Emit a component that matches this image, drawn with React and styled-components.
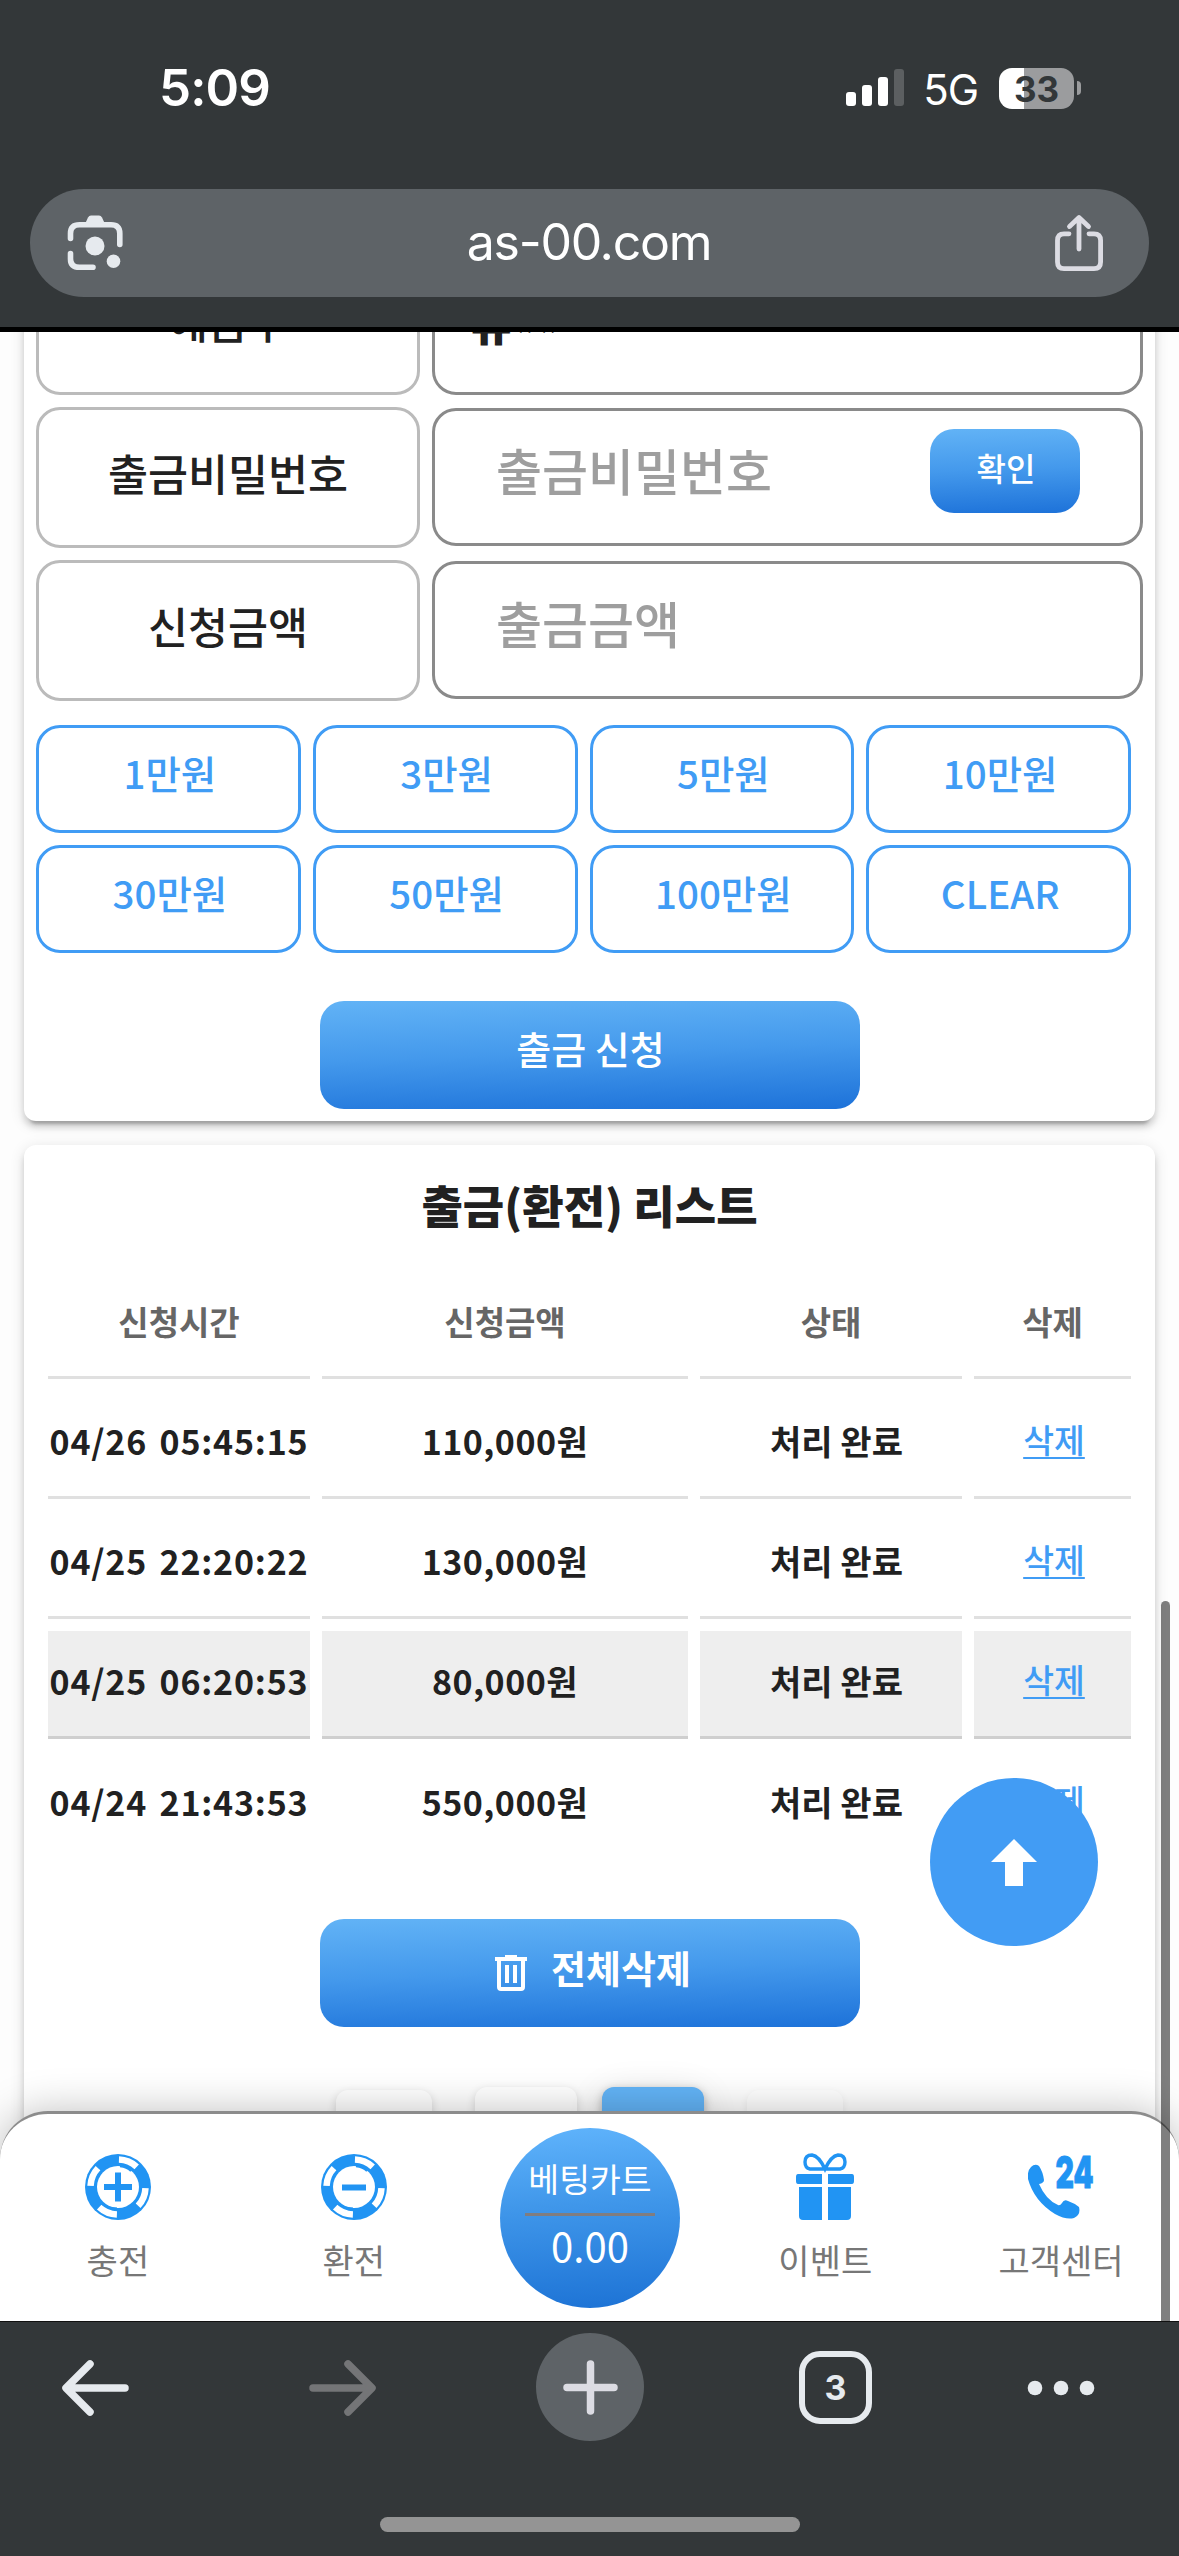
import React from "react";
import styled, { createGlobalStyle } from "styled-components";

const KR = `"Noto Sans CJK KR", "Noto Sans", sans-serif`;
const UI = `Inter, Roboto, sans-serif`;

const Global = createGlobalStyle`
  * { box-sizing: border-box; }
  body { margin: 0; background: #333739; }
  button { font: inherit; border: 0; padding: 0; background: none; cursor: pointer; }
`;

const Screen = styled.div`
  width: 1179px;
  height: 2556px;
  display: flex;
  flex-direction: column;
  overflow: hidden;
  background: #333739;
  font-family: ${KR};
  color: #212121;
`;

/* ---------- status bar + address bar ---------- */
const Header = styled.header`
  flex: none;
  height: 332px;
  border-bottom: 5px solid #000;
  padding: 60px 30px 0;
  font-family: ${UI};
  color: #fff;
`;

const StatusBar = styled.div`
  height: 56px;
  display: flex;
  align-items: center;
  justify-content: space-between;
  padding: 0 68px 0 129px;
`;

const Clock = styled.span`
  font-size: 51px;
  font-weight: 600;
  line-height: 56px;
  letter-spacing: -0.9px;
`;

const StatusIcons = styled.div`
  display: flex;
  align-items: center;
`;

const Network = styled.span`
  font-size: 42px;
  font-weight: 400;
  line-height: 56px;
  margin: 3px 21px 0 19px;
  letter-spacing: -1px;
`;

const Battery = styled.div`
  width: 75px;
  height: 41px;
  border-radius: 13px;
  background: linear-gradient(90deg, #fff 33%, #9b9c9e 33%);
  color: #333739;
  font-size: 35px;
  font-weight: 700;
  line-height: 42px;
  text-align: center;
`;

const BatteryNub = styled.div`
  width: 4px;
  height: 14px;
  margin-left: 3px;
  border-radius: 0 4px 4px 0;
  background: #9b9c9e;
`;

const AddressBar = styled.div`
  height: 108px;
  margin-top: 73px;
  border-radius: 54px;
  background: #5e6367;
  display: flex;
  align-items: center;
  justify-content: space-between;
  padding: 0 45px 0 36px;
`;

const Address = styled.span`
  font-size: 50px;
  line-height: 60px;
  letter-spacing: -1.3px;
  margin-top: -3px;
`;

/* ---------- page ---------- */
const Viewport = styled.main`
  flex: none;
  position: relative;
  height: 1989px;
  overflow: hidden;
  background: #fdfdfd;
`;

const ScrolledPage = styled.div`
  margin-top: -90px;
  padding: 0 24px;
  display: flex;
  flex-direction: column;
  gap: 24px;
`;

const Card = styled.section`
  background: #fff;
  border-radius: 12px;
  padding: ${(p) => p.$pad};
  min-height: ${(p) => p.$minHeight || "0"};
  box-shadow: 0 9px 3px -6px rgba(0, 0, 0, 0.2), 0 6px 6px rgba(0, 0, 0, 0.14),
    0 3px 15px rgba(0, 0, 0, 0.12);
  display: flex;
  flex-direction: column;
  align-items: center;
`;

const FormGrid = styled.div`
  width: 100%;
  display: grid;
  grid-template-columns: 384px 711px;
  grid-auto-rows: 141px;
  gap: 12px;
`;

const FieldLabel = styled.label`
  border: 3px solid #bbb;
  border-radius: 24px;
  display: flex;
  align-items: center;
  justify-content: center;
  padding-bottom: ${(p) => (p.$low ? 7 : 10)}px;
  font-size: 43.5px;
  font-weight: 500;
  line-height: 60px;
`;

const FieldBox = styled.div`
  margin: ${(p) => (p.$value ? "0" : "1px 0 2px")};
  border: 3px solid #8a8a8a;
  border-radius: 24px;
  display: flex;
  justify-content: ${(p) => (p.$value ? "flex-start" : "space-between")};
  align-items: center;
  padding: 0 60px ${(p) => (p.$value ? 5 : 16)}px ${(p) => (p.$value ? 36 : 61)}px;
  font-size: ${(p) => (p.$value ? 44 : 50)}px;
  font-weight: ${(p) => (p.$value ? 900 : 500)};
  line-height: 60px;
  color: ${(p) => (p.$value ? "#212121" : "#9e9e9e")};
`;

const Mask = styled.span`
  padding-top: 18px;
  margin-left: 2px;
`;

const GradientButton = styled.button`
  width: ${(p) => p.$w}px;
  height: ${(p) => p.$h}px;
  margin-top: ${(p) => p.$mt || 0}px;
  border-radius: 24px;
  background: linear-gradient(178deg, #62b3f6 0%, #4499ec 48%, #1d72d9 100%);
  color: #fff;
  font-size: ${(p) => p.$size}px;
  font-weight: ${(p) => p.$weight || 500};
  line-height: 50px;
  padding: 0 0 ${(p) => p.$lift}px ${(p) => p.$indent || 0}px;
  display: flex;
  align-items: center;
  justify-content: center;
`;

const AmountGrid = styled.div`
  width: 1095px;
  align-self: flex-start;
  margin: 24px 0 48px;
  display: grid;
  grid-template-columns: repeat(4, 1fr);
  grid-auto-rows: 108px;
  gap: 12px;
`;

const AmountButton = styled.button`
  border: 3px solid #409cf5;
  border-radius: 24px;
  color: #409cf5;
  font-size: 38.5px;
  font-weight: 500;
  line-height: 50px;
  padding: 0 0 14px 3px;
`;

const ListTitle = styled.h2`
  margin: 2px 0 33px;
  font-size: 45px;
  font-weight: 900;
  line-height: 67px;
`;

const Table = styled.div`
  width: 1083px;
  margin-bottom: 60px;
  display: grid;
  grid-template-columns: 262px 366px 262px 157px;
  grid-auto-rows: 108px;
  gap: 12px;
`;

const Cell = styled.div`
  border-bottom: 3px solid ${(p) => (p.$last ? "transparent" : p.$shaded ? "#cfcfcf" : "#e0e0e0")};
  background: ${(p) => (p.$shaded ? "#eee" : "transparent")};
  color: ${(p) => (p.$head ? "#666" : "#212121")};
  font-size: ${(p) => (p.$head ? 33 : 34)}px;
  font-weight: 700;
  line-height: 50px;
  white-space: nowrap;
  letter-spacing: ${(p) => p.$spacing || 0}px;
  word-spacing: ${(p) => (p.$spacing ? 4 : 0)}px;
  padding: 0 0 ${(p) => (p.$last ? 4 : 6)}px ${(p) => p.$indent || 0}px;
  display: flex;
  align-items: center;
  justify-content: center;
`;

const DeleteLink = styled.a`
  margin-top: -3px;
  color: #409cf5;
  font-size: 33.5px;
  font-weight: 500;
  text-decoration: underline;
  text-decoration-thickness: 2px;
  text-underline-offset: 4px;
  text-decoration-skip-ink: none;
`;

const TrashIcon = styled.svg`
  margin: 12px 24px 0 0;
`;

const Pager = styled.div`
  margin-top: 60px;
  display: flex;
  align-items: flex-start;
`;

const PageButton = styled.button`
  width: ${(p) => (p.$wide ? 102 : 96)}px;
  height: ${(p) => (p.$wide ? 102 : 96)}px;
  margin: ${(p) => (p.$wide ? 0 : 3)}px ${(p) => p.$gap || 0}px 0 0;
  border-radius: 12px;
  background: ${(p) => (p.$active ? "#62b3f6" : "#fff")};
  box-shadow: ${(p) =>
    p.$active
      ? "0 3px 10px rgba(0,0,0,.28), 0 6px 36px rgba(0,0,0,.12)"
      : p.$faint
      ? "0 3px 8px rgba(0,0,0,.07)"
      : "0 3px 10px rgba(0,0,0,.16)"};
`;

/* ---------- overlays ---------- */
const TopButton = styled.button`
  position: absolute;
  right: 81px;
  top: 1446px;
  width: 168px;
  height: 168px;
  border-radius: 50%;
  background: #429cf4;
  display: flex;
  align-items: center;
  justify-content: center;
`;

const SiteNav = styled.nav`
  position: absolute;
  left: 0;
  right: 0;
  bottom: 0;
  height: 210px;
  border-top: 3px solid #8c8c8c;
  border-radius: 48px 48px 0 0;
  background: #fff;
  box-shadow: 0 0 42px rgba(0, 0, 0, 0.25);
  display: grid;
  grid-template-columns: repeat(5, 1fr);
  justify-items: center;
`;

const NavItem = styled.a`
  padding-top: 38px;
  display: flex;
  flex-direction: column;
  align-items: center;
  font-size: 34px;
  line-height: 50px;
  color: #777;

  svg {
    height: 70px;
    display: block;
    margin-bottom: 13px;
  }
`;

const BetCart = styled.div`
  width: 180px;
  height: 180px;
  margin: 14px 0 0 1px;
  border-radius: 50%;
  background: linear-gradient(176deg, #60b4fc 0%, #4097ea 42%, #1c72d5 100%);
  color: #fff;
  display: flex;
  flex-direction: column;
  align-items: center;
`;

const CartTitle = styled.div`
  width: 130px;
  height: 88px;
  padding-top: 25px;
  border-bottom: 3px solid #807d80;
  display: flex;
  justify-content: center;
  font-size: 33.5px;
  line-height: 50px;
  white-space: nowrap;
`;

const CartTotal = styled.div`
  margin-top: 4px;
  font-size: 40px;
  line-height: 50px;
`;

const ScrollThumb = styled.div`
  position: absolute;
  right: 9px;
  top: 1269px;
  bottom: -12px;
  width: 9px;
  border-radius: 5px;
  background: rgba(0, 0, 0, 0.5);
`;

/* ---------- browser toolbar ---------- */
const Toolbar = styled.footer`
  flex: 1;
  border-top: 1px solid #111;
  display: flex;
  flex-direction: column;
  align-items: center;
  justify-content: space-between;
  padding: 11px 0 24px;
`;

const ToolRow = styled.div`
  width: 100%;
  height: 108px;
  padding: 0 84px 0 62px;
  display: flex;
  align-items: center;
`;

const ToolButton = styled.button`
  width: ${(p) => p.$w}px;
  margin-left: ${(p) => p.$ml || 0}px;
  height: 108px;
  padding-top: 1px;
  display: flex;
  align-items: center;
  justify-content: center;
`;

const NewTab = styled(ToolButton)`
  padding-top: 0;
  border-radius: 50%;
  background: #5e6367;
`;

const TabCount = styled.span`
  width: 73px;
  height: 73px;
  border: 6.5px solid #e6eaee;
  border-radius: 21px;
  color: #e6eaee;
  font-family: ${UI};
  font-size: 34px;
  font-weight: 700;
  line-height: 61px;
  text-align: center;
`;

const HomeIndicator = styled.div`
  width: 420px;
  height: 15px;
  border-radius: 8px;
  background: #949494;
`;

const Signal = () => (
  <svg width="58" height="38" viewBox="0 0 58 38" fill="#fff">
    <rect x="0" y="23" width="10" height="14" rx="3" />
    <rect x="16" y="16" width="10" height="21" rx="3" />
    <rect x="32" y="8" width="10" height="29" rx="3" />
    <rect x="48" y="0" width="10" height="37" rx="3" fill="#5c5f61" />
  </svg>
);

const LensIcon = () => (
  <svg width="58" height="58" viewBox="66 214 58 58" fill="none" stroke="#e6eaee" strokeWidth="5.6" strokeLinecap="round">
    <path d="M70.5 238.500V233.500Q70.500 224.800 79.500 224.800H111Q119.800 224.800 119.800 233.500V244.500" />
    <path d="M70.500 253.500V259Q70.500 267.300 79.500 267.300H93" />
    <path d="M85 224L88 217.500Q89 215.500 91 215.500H99Q101 215.500 102 217.500L105 224Z" fill="#e6eaee" stroke="none" />
    <circle cx="95" cy="246" r="9.500" fill="#e6eaee" stroke="none" />
    <circle cx="113.500" cy="261.300" r="6.800" fill="#e6eaee" stroke="none" />
  </svg>
);

const ShareIcon = () => (
  <svg width="50" height="60" viewBox="1054 214 50 60" fill="none" stroke="#dcdce3" strokeWidth="4.800" strokeLinecap="round" strokeLinejoin="round">
    <path d="M1069 234.800H1064Q1057.500 234.800 1057.500 241.500V263Q1057.500 269.600 1064 269.600H1094Q1100.600 269.600 1100.600 263V241.500Q1100.600 234.800 1094 234.800H1089" />
    <path d="M1079 250V219M1069.500 227.500L1079 218.500L1088.500 227.500" />
  </svg>
);

const ChipIcon = ({ plus }) => (
  <svg width="66" viewBox="0 -2 66 70" fill="none">
    <circle cx="33" cy="33" r="33" fill="#2194f3" />
    <circle cx="33" cy="33" r="27.500" stroke="#fff" strokeWidth="6.500" strokeDasharray="19.600 23.600" strokeDashoffset="0" transform="rotate(-88 33 33)" />
    <circle cx="33" cy="33" r="21" fill="#fff" />
    <path d="M35 12.300Q42 13 46 17M16 49Q22 54 32 54.500" stroke="#2194f3" strokeWidth="2" />
    <path d={plus ? "M19 33H47M33 18.500V47.500" : "M21 33.500H45"} stroke="#2194f3" strokeWidth="6" />
  </svg>
);

const GiftIcon = () => (
  <svg width="60" viewBox="0 0 60 70" fill="#2194f3">
    <path d="M3 22H27V32H3Q1 32 1 29V25Q1 22 3 22ZM33 22H57Q59 22 59 25V29Q59 32 57 32H33Z" />
    <path d="M4 35H27V68H8Q4 68 4 64ZM33 35H56V64Q56 68 52 68H33Z" />
    <path d="M30 17H15Q10 16 10 10Q10 3 17 3Q24 4 30 17Q36 4 43 3Q50 3 50 10Q50 16 45 17Z" fill="none" stroke="#2194f3" strokeWidth="3.400" />
  </svg>
);

const Phone24Icon = () => (
  <svg width="66" viewBox="0 0 66 70" fill="#2194f3">
    <path d="M3 15Q7 11 11 14Q15 20 16 28Q16 31 11 32Q18 48 30 53Q32 54 34 51Q36 47 40 49Q46 51 51 55Q53 63 46 66Q38 68 27 62Q6 49 0 27Q-1 19 3 15Z" />
    <text x="27.500" y="36" fontFamily="Inter, sans-serif" fontWeight="900" fontSize="44" textLength="38" lengthAdjust="spacingAndGlyphs" stroke="#2194f3" strokeWidth="1">24</text>
  </svg>
);

const amounts = ["1만원", "3만원", "5만원", "10만원", "30만원", "50만원", "100만원", "CLEAR"];

const withdrawals = [
  { time: "04/26 05:45:15", amount: "110,000원" },
  { time: "04/25 22:20:22", amount: "130,000원" },
  { time: "04/25 06:20:53", amount: "80,000원", shaded: true },
  { time: "04/24 21:43:53", amount: "550,000원", last: true },
];

export default function App() {
  return (
    <Screen>
      <Global />
      <Header>
        <StatusBar>
          <Clock>5:09</Clock>
          <StatusIcons>
            <Signal />
            <Network>5G</Network>
            <Battery>33</Battery>
            <BatteryNub />
          </StatusIcons>
        </StatusBar>
        <AddressBar>
          <LensIcon />
          <Address>as-00.com</Address>
          <ShareIcon />
        </AddressBar>
      </Header>

      <Viewport>
        <ScrolledPage>
          <Card $pad="12px">
            <FormGrid>
              <FieldLabel $low>예금주</FieldLabel>
              <FieldBox $value>
                류<Mask>**</Mask>
              </FieldBox>
              <FieldLabel>출금비밀번호</FieldLabel>
              <FieldBox>
                출금비밀번호
                <GradientButton $w={150} $h={84} $mt={3} $size={32} $lift={8} $indent={2}>확인</GradientButton>
              </FieldBox>
              <FieldLabel>신청금액</FieldLabel>
              <FieldBox>출금금액</FieldBox>
            </FormGrid>
            <AmountGrid>
              {amounts.map((a) => (
                <AmountButton key={a}>{a}</AmountButton>
              ))}
            </AmountGrid>
            <GradientButton $w={540} $h={108} $size={38} $lift={14} $indent={2}>출금 신청</GradientButton>
          </Card>

          <Card $pad="24px 24px 0" $minHeight="1300px">
            <ListTitle>출금(환전) 리스트</ListTitle>
            <Table>
              {["신청시간", "신청금액", "상태", "삭제"].map((h) => (
                <Cell key={h} $head>{h}</Cell>
              ))}
              {withdrawals.map((w) => (
                <React.Fragment key={w.time}>
                  <Cell $shaded={w.shaded} $last={w.last} $spacing={0.8}>{w.time}</Cell>
                  <Cell $shaded={w.shaded} $last={w.last} $spacing={0.5}>{w.amount}</Cell>
                  <Cell $shaded={w.shaded} $last={w.last} $indent={11}>처리 완료</Cell>
                  <Cell $shaded={w.shaded} $last={w.last} $indent={3}>
                    <DeleteLink>삭제</DeleteLink>
                  </Cell>
                </React.Fragment>
              ))}
            </Table>
            <GradientButton $w={540} $h={108} $size={38} $weight={700} $lift={12} $indent={7}>
              <TrashIcon width="32" height="36" viewBox="0 0 32 36" fill="none" stroke="#fff" strokeWidth="4">
                <path d="M0 4H32M10 2H22M4 4V32Q4 34 6 34H26Q28 34 28 32V4M12 10V28M20 10V28" />
              </TrashIcon>
              전체삭제
            </GradientButton>
            <Pager>
              <PageButton $gap={43} />
              <PageButton $wide $gap={25} />
              <PageButton $wide $active $gap={43} />
              <PageButton $faint />
            </Pager>
          </Card>
        </ScrolledPage>

        <TopButton>
          <svg width="46" height="47" viewBox="0 0 46 47" fill="#fff">
            <path d="M23 0L46 23H32V47H14V23H0Z" />
          </svg>
        </TopButton>

        <SiteNav>
          <NavItem><ChipIcon plus />충전</NavItem>
          <NavItem><ChipIcon />환전</NavItem>
          <BetCart>
            <CartTitle>베팅카트</CartTitle>
            <CartTotal>0.00</CartTotal>
          </BetCart>
          <NavItem><GiftIcon />이벤트</NavItem>
          <NavItem><Phone24Icon />고객센터</NavItem>
        </SiteNav>
        <ScrollThumb />
      </Viewport>

      <Toolbar>
        <ToolRow>
          <ToolButton $w={67}>
            <svg width="67" height="56" viewBox="0 0 67 56" fill="none" stroke="#e6eaee" strokeWidth="7.500" strokeLinecap="round" strokeLinejoin="round">
              <path d="M28 4L4 28L28 52M5 28H63" />
            </svg>
          </ToolButton>
          <ToolButton $w={67} $ml={180}>
            <svg width="67" height="56" viewBox="0 0 67 56" fill="none" stroke="#747577" strokeWidth="7.500" strokeLinecap="round" strokeLinejoin="round">
              <path d="M39 4L63 28L39 52M62 28H4" />
            </svg>
          </ToolButton>
          <NewTab $w={108} $ml={160}>
            <svg width="55" height="55" viewBox="0 0 55 55" fill="none" stroke="#dcdce3" strokeWidth="7.500" strokeLinecap="round">
              <path d="M27.500 4V51M4 27.500H51" />
            </svg>
          </NewTab>
          <ToolButton $w={73} $ml={155}>
            <TabCount>3</TabCount>
          </ToolButton>
          <ToolButton $w={68} $ml={155}>
            <svg width="68" height="16" viewBox="0 0 68 16" fill="#e6eaee">
              <circle cx="8" cy="8" r="7.300" />
              <circle cx="34" cy="8" r="7.300" />
              <circle cx="60" cy="8" r="7.300" />
            </svg>
          </ToolButton>
        </ToolRow>
        <HomeIndicator />
      </Toolbar>
    </Screen>
  );
}
